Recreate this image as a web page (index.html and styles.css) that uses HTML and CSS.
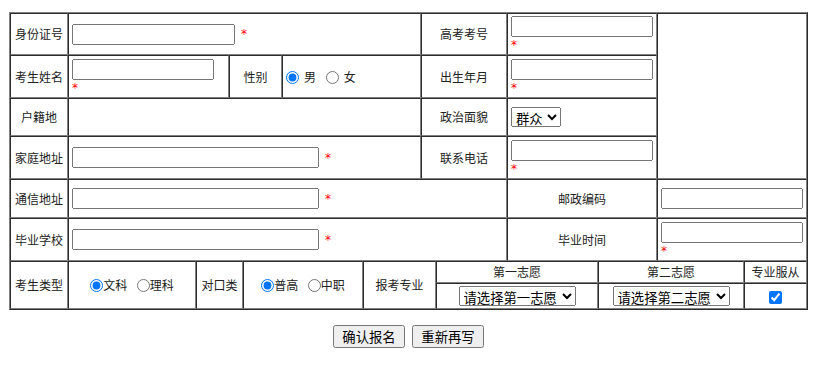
FILE: index.html
```html
<!DOCTYPE html>
<html lang="zh-CN">

<head>
    <meta charset="UTF-8">
    <meta name="viewport" content="width=device-width, initial-scale=1.0">
    <title>考生报名</title>

    <link rel="stylesheet" href="styles.css">
</head>

<body>
    <form class="signForm">
        <table class="signTable">
            <colgroup>
                <col class="c1"><col class="c2"><col class="c3"><col class="c4"><col class="c5">
                <col class="c6"><col class="c7"><col class="c8"><col class="c9"><col class="c10">
                <col class="c11"><col class="c12"><col class="c13">
            </colgroup>
            <tr class="r1">
                <td class="lbl">身份证号</td>
                <td colspan="6"><input type="text" class="w163"><span class="req side">*</span></td>
                <td colspan="2" class="lbl">高考考号</td>
                <td colspan="2"><input type="text" class="w142"><br><span class="req">*</span></td>
                <td colspan="2" rowspan="4"></td>
            </tr>
            <tr class="r2">
                <td class="lbl">考生姓名</td>
                <td colspan="2"><input type="text" class="w142"><br><span class="req">*</span></td>
                <td colspan="2" class="lbl">性别</td>
                <td colspan="2">
                    <label class="opt gap"><input type="radio" name="sex" checked>男</label><label class="opt gap">
                        <input type="radio" name="sex">女</label>
                </td>
                <td colspan="2" class="lbl">出生年月</td>
                <td colspan="2"><input type="text" class="w142"><br><span class="req">*</span></td>
            </tr>
            <tr class="r3">
                <td class="lbl">户籍地</td>
                <td colspan="6"></td>
                <td colspan="2" class="lbl">政治面貌</td>
                <td colspan="2">
                    <select class="selParty">
                        <option>群众</option>
                        <option>团员</option>
                        <option>党员</option>
                    </select>
                </td>
            </tr>
            <tr class="r4">
                <td class="lbl">家庭地址</td>
                <td colspan="6"><input type="text" class="w247"><span class="req side">*</span></td>
                <td colspan="2" class="lbl">联系电话</td>
                <td colspan="2"><input type="text" class="w142"><br><span class="req">*</span></td>
            </tr>
            <tr class="r5">
                <td class="lbl">通信地址</td>
                <td colspan="8"><input type="text" class="w247"><span class="req side">*</span></td>
                <td colspan="2" class="lbl">邮政编码</td>
                <td colspan="2"><input type="text" class="w142"></td>
            </tr>
            <tr class="r6">
                <td class="lbl">毕业学校</td>
                <td colspan="8"><input type="text" class="w247"><span class="req side">*</span></td>
                <td colspan="2" class="lbl">毕业时间</td>
                <td colspan="2"><input type="text" class="w142"><br><span class="req">*</span></td>
            </tr>
            <tr class="r7">
                <td class="lbl" rowspan="2">考生类型</td>
                <td class="lbl" rowspan="2">
                    <label class="opt"><input type="radio" name="kind" checked>文科</label><label class="opt">
                        <input type="radio" name="kind">理科</label>
                </td>
                <td class="lbl" colspan="2" rowspan="2">对口类</td>
                <td class="lbl" colspan="2" rowspan="2">
                    <label class="opt"><input type="radio" name="track" checked>普高</label><label class="opt">
                        <input type="radio" name="track">中职</label>
                </td>
                <td class="lbl" colspan="2" rowspan="2">报考专业</td>
                <td class="lbl" colspan="2">第一志愿</td>
                <td class="lbl" colspan="2">第二志愿</td>
                <td class="lbl">专业服从</td>
            </tr>
            <tr class="r8">
                <td class="lbl" colspan="2">
                    <select class="selMajor">
                        <option>请选择第一志愿</option>
                    </select>
                </td>
                <td class="lbl" colspan="2">
                    <select class="selMajor">
                        <option>请选择第二志愿</option>
                    </select>
                </td>
                <td class="lbl"><input type="checkbox" class="obey" checked></td>
            </tr>
        </table>

        <div class="actions">
            <button type="submit">确认报名</button>
            <button type="reset">重新再写</button>
        </div>
    </form>
</body>

</html>
```

FILE: styles.css
```css
body {
    margin: 0;
    font-family: "Noto Sans CJK SC", "Noto Sans", sans-serif;
    font-size: 12px;
    color: #222;
    background-color: #fff;
}

.signForm {
    width: 799px;
    padding: 12px 0 0 9px;
}

.signTable {
    width: 799px;
    table-layout: fixed;
    border-collapse: separate;
    border-spacing: 0;
    border: 1px outset grey;
}

.signTable td {
    border: 1px inset grey;
    padding: 1px 3px;
    line-height: 14px;
    vertical-align: middle;
}

.signTable .lbl {
    text-align: center;
}

.c1 { width: 58px; }
.c2 { width: 128px; }
.c3 { width: 33px; }
.c4 { width: 14px; }
.c5 { width: 39px; }
.c6 { width: 81px; }
.c7 { width: 58px; }
.c8 { width: 15px; }
.c9 { width: 71px; }
.c10 { width: 91px; }
.c11 { width: 59px; }
.c12 { width: 87px; }
.c13 { width: 63px; }

.r1 { height: 42px; }
.r2 { height: 43px; }
.r3 { height: 38px; }
.r4 { height: 43px; }
.r5 { height: 39px; }
.r6 { height: 43px; }
.r7 { height: 22px; }
.r8 { height: 26px; }

input[type="text"] {
    height: 21px;
    box-sizing: border-box;
    margin: 0;
    vertical-align: middle;
}

.w142 { width: 142px; }
.w163 { width: 163px; }
.w247 { width: 247px; }

.req {
    color: #f00;
    font-family: "DejaVu Sans", sans-serif;
    font-size: 12px;
}

.req.side {
    margin-left: 6px;
    vertical-align: middle;
}

.opt input[type="radio"] {
    width: 13px;
    height: 13px;
    margin: 0;
    vertical-align: -2px;
}

.opt + .opt {
    margin-left: 7px;
}

.opt.gap input[type="radio"] {
    margin-right: 5px;
}

.signTable select {
    font-family: "Noto Sans CJK SC", sans-serif;
    font-size: 13.33px;
    height: 20px;
    padding: 0;
    margin: 0;
    color: #000;
    vertical-align: middle;
}

.selParty { width: 50px; }
.selMajor { width: 117px; }

.obey {
    width: 13px;
    height: 13px;
    margin: 0;
    vertical-align: middle;
}

.actions {
    display: flex;
    justify-content: center;
    gap: 7px;
    margin-top: 15px;
}

.actions button {
    width: 72px;
    height: 23px;
    padding: 0;
    font-family: "Noto Sans CJK SC", sans-serif;
    font-size: 13.33px;
    color: #000;
}
```
